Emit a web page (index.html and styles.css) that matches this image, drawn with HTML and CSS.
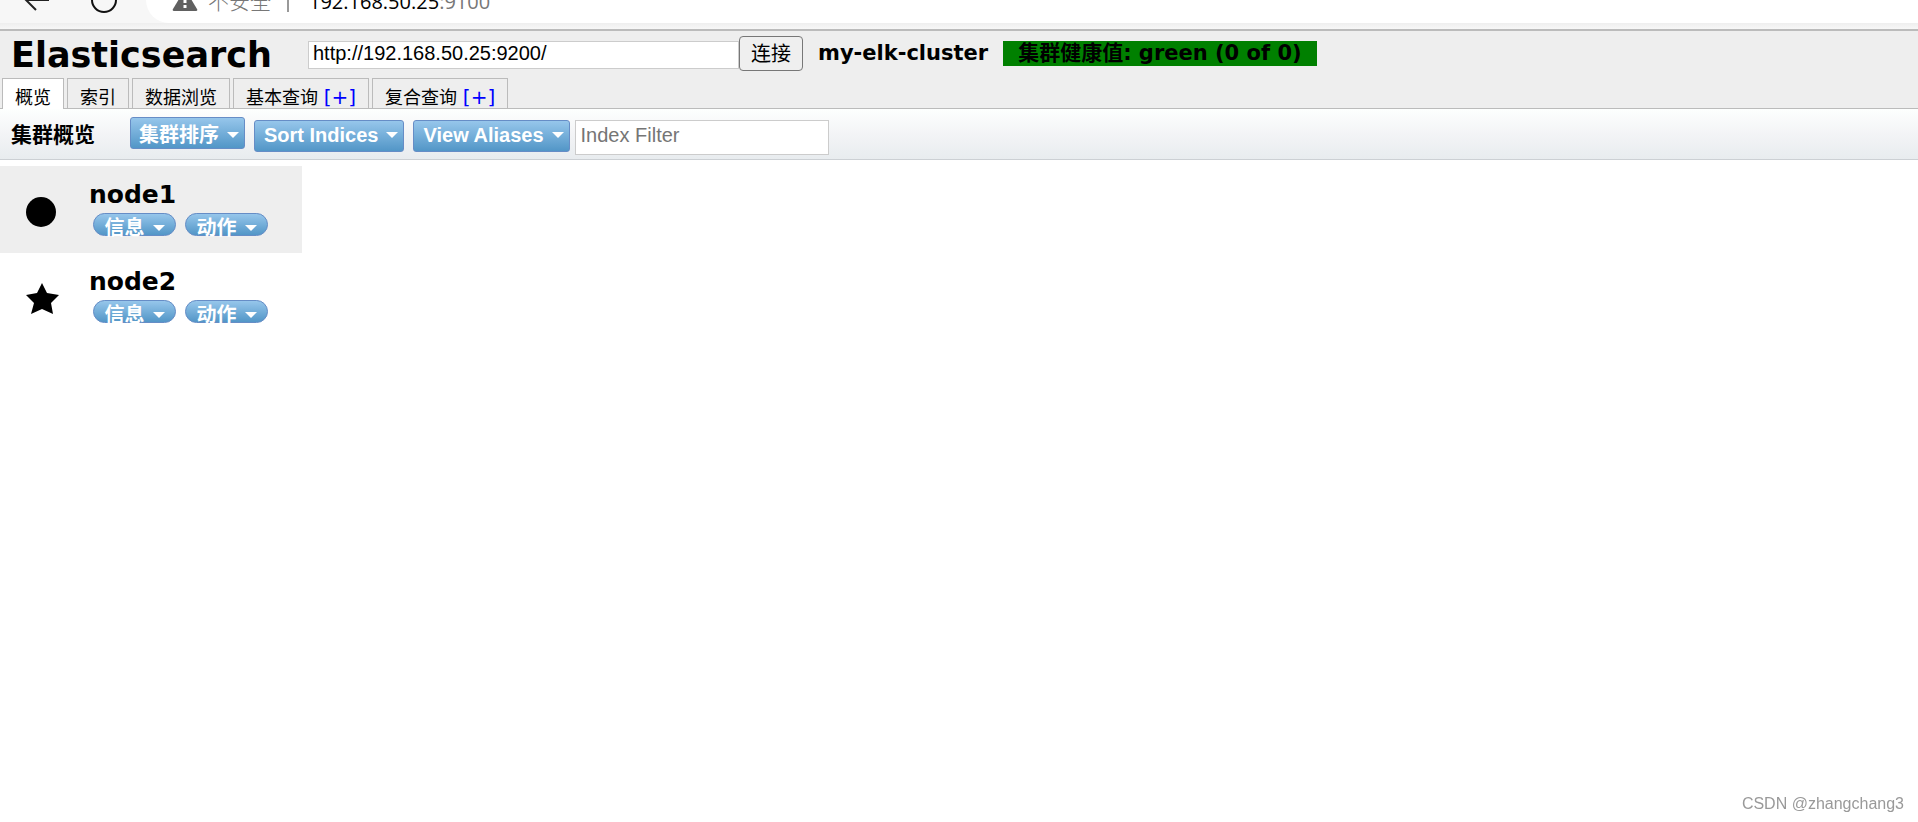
FILE: index.html
```
<!DOCTYPE html>
<html lang="zh">
<head>
  <meta charset="UTF-8" />
  <meta name="viewport" content="width=device-width, initial-scale=1.0"/>
  <title>elasticsearch-head</title>
  <link rel="stylesheet" href="styles.css">
</head>
<body>
  <div class="browser">
    <button class="nav-btn nav-back" aria-label="Back">
      <svg width="26" height="22" viewBox="0 0 26 22"><path d="M25 11H2M12 1L2 11l10 10" fill="none" stroke="#222" stroke-width="2"/></svg>
    </button>
    <button class="nav-btn" aria-label="Refresh">
      <svg width="26" height="26" viewBox="0 0 26 26"><circle cx="13" cy="13" r="12" fill="none" stroke="#111" stroke-width="2"/></svg>
    </button>
    <div class="address">
      <svg width="26" height="24" viewBox="0 0 26 24"><path d="M13 1L25 21q1 2-1 2H2q-2 0-1-2z" fill="#606060"/><path d="M13 7v8M13 17v3" stroke="#fff" stroke-width="3"/></svg>
      <span class="unsafe">不安全</span>
      <span class="divider"></span>
      <span class="url">192.168.50.25<span class="port">:9100</span></span>
    </div>
  </div>

  <header class="header">
    <div class="header-top">
      <h1>Elasticsearch</h1>
      <form class="connect">
        <input type="text" class="connect-uri" aria-label="URI" value="http://192.168.50.25:9200/">
        <button type="button" class="connect-btn">连接</button>
      </form>
      <span class="cluster-name">my-elk-cluster</span>
      <span class="health">集群健康值: green (0 of 0)</span>
    </div>
    <nav class="tabs">
      <div class="tab active">概览</div>
      <div class="tab">索引</div>
      <div class="tab">数据浏览</div>
      <div class="tab">基本查询 <a href="#">[+]</a></div>
      <div class="tab">复合查询 <a href="#">[+]</a></div>
    </nav>
  </header>

  <div class="toolbar">
    <h2>集群概览</h2>
    <button class="menu-btn menu-sort">集群排序</button>
    <button class="menu-btn">Sort Indices</button>
    <button class="menu-btn">View Aliases</button>
    <input type="text" class="filter" placeholder="Index Filter" aria-label="Index Filter">
  </div>

  <table class="nodes">
    <tr>
      <td class="node-icon"><svg width="34" height="34" viewBox="0 0 34 34"><circle cx="16" cy="16" r="15"/></svg></td>
      <td class="node-info">
        <div class="node-name">node1</div>
        <div class="node-controls">
          <button class="pill-btn">信息</button>
          <button class="pill-btn">动作</button>
        </div>
      </td>
    </tr>
    <tr>
      <td class="node-icon"><svg width="34" height="34" viewBox="0 0 34 34"><path d="M17 0L22 10L34 12L26 20L28 31L17 26L6 31L9 20L1 12L12 10z"/></svg></td>
      <td class="node-info">
        <div class="node-name">node2</div>
        <div class="node-controls">
          <button class="pill-btn">信息</button>
          <button class="pill-btn">动作</button>
        </div>
      </td>
    </tr>
  </table>

  <div class="watermark">CSDN @zhangchang3</div>
</body>
</html>
```
FILE: styles.css
```
* { box-sizing: border-box; }
body { margin: 0; background: #fff; color: #000; font-family: "DejaVu Sans", "Noto Sans CJK SC", sans-serif; }
h1, h2 { margin: 0; font-weight: bold; }
button, input { margin: 0; font-family: "Liberation Sans", "Noto Sans CJK SC", sans-serif; font-size: 20px; }

/* browser bar, cut off at the top of the window */
.browser { display: flex; align-items: flex-end; height: 29px; padding-bottom: 6px; overflow: hidden; background: linear-gradient(#f7f7f7 23px, #eee 23px, #f7f7f7); }
.nav-btn { display: flex; flex: none; align-items: center; justify-content: center; width: 60px; height: 46px; padding: 0; border: 0; background: none; }
.nav-back { width: 74px; }
.address { display: flex; flex: 1; align-items: center; height: 46px; margin-left: 12px; padding-left: 26px; border-radius: 23px 0 0 23px; background: #fff; font-family: "Open Sans", "Noto Sans CJK SC", sans-serif; font-size: 20px; }
.unsafe { margin-left: 10px; color: #777; font-size: 21px; font-weight: 300; font-family: "Noto Sans CJK SC", sans-serif; }
.divider { width: 2px; height: 24px; margin: 0 20px 0 16px; background: #999; }
.url { padding-top: 2px; }
.port { color: #777; }

.header { border-top: 2px solid #bbb; border-bottom: 1px solid #bbb; background: #eee; }
.header-top { display: flex; align-items: center; height: 47px; padding: 0 11px; }
h1 { width: 297px; font-size: 35px; line-height: 44px; }
.connect { display: flex; align-items: center; margin-right: 15px; }
.connect-uri { width: 431px; height: 28px; padding: 0 4px 2px; border: 1px solid #ccc; }
.connect-btn { width: 64px; height: 35px; margin-bottom: 2px; padding: 0 0 2px; border: 1px solid #777; border-radius: 4px; background: #efefef; }
.cluster-name, .health { margin-bottom: 3px; font-size: 21px; font-weight: bold; line-height: 25px; }
.health { margin-left: 15px; padding: 0 15px; background: #008000; }

.tabs { display: flex; gap: 3px; height: 30px; padding-left: 2px; }
.tab { height: 30px; padding: 4px 12px 0; border: 1px solid #bbb; border-bottom: 0; font-size: 18px; line-height: 29px; }
.tab.active { height: 31px; background: #fff; }
.tab a { color: #00f; font-size: 20px; line-height: 20px; text-decoration: none; }

.toolbar { display: flex; align-items: flex-start; height: 51px; padding: 11px 11px 0; border-bottom: 1px solid #ccd0d4; background: linear-gradient(#fdfffe, #f3f4f6 50%, #e8ecef); }
h2 { width: 119px; font-size: 21px; line-height: 30px; }
.menu-btn { height: 32px; margin-right: 9px; padding: 0 5px 2px 9px; border: 1px solid #668dc6; border-radius: 3px; background: linear-gradient(#96c6eb, #5296c7); color: #fff; font-weight: bold; }
.menu-sort { margin-top: -3px; padding: 0 5px 0 8px; }
.menu-btn::after, .pill-btn::after { content: ""; display: inline-block; margin-left: 8px; border: 6px solid transparent; border-top-color: #fff; border-bottom: 0; vertical-align: 4px; }
.filter { width: 254px; height: 35px; margin-left: -4px; padding: 0 5px 4px; border: 1px solid #ccc; }
.filter::placeholder { color: #757575; opacity: 1; }

.nodes { margin-top: 6px; border-collapse: collapse; }
.nodes tr { height: 87px; }
.nodes tr:first-child { background: #eee; }
.nodes td { padding: 0; vertical-align: top; }
.nodes .node-icon { width: 89px; padding: 30px 0 0 25px; }
.nodes .node-info { width: 213px; padding-top: 11px; }
.node-name { font-size: 25px; font-weight: bold; line-height: 36px; }
.node-controls { display: flex; gap: 9px; padding-left: 4px; }
.pill-btn { width: 83px; height: 23px; padding: 4px 0 0; border: 1px solid #668dc6; border-radius: 12px; background: linear-gradient(#96c6eb, #5296c7); color: #fff; font-weight: bold; line-height: 20px; white-space: nowrap; }

.watermark { position: fixed; right: 14px; bottom: 9px; color: #999; font-family: "Liberation Sans", sans-serif; font-size: 16px; }
```
